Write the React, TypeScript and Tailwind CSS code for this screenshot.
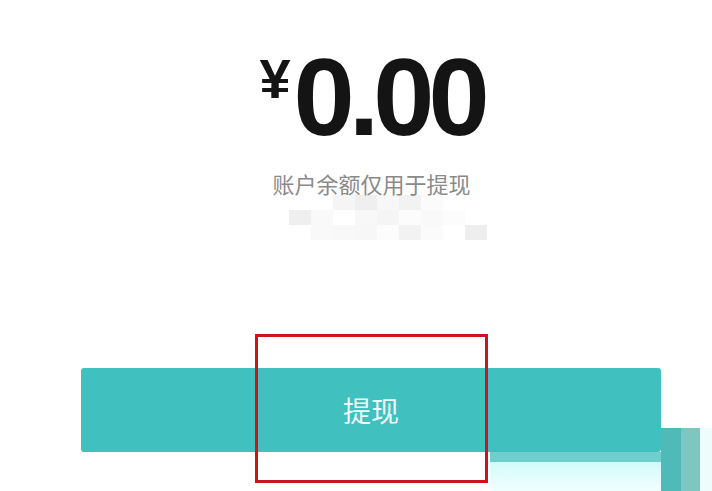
import React from "react";

// mosaic cells left over from a blurred line under the caption
const MOSAIC: string[][] = [
  ["", "", "#f5f5f5", "#efefef", "#f7f7f7", "#f2f2f2", "#fbfbfb", "", ""],
  ["#efefef", "#f9f9f9", "", "#f8f8f8", "#f5f5f5", "#fcfcfc", "#f9f9f9", "#fcfcfc", ""],
  ["", "#f9f9f9", "#f8f8f8", "#f7f7f7", "#fcfcfc", "#f2f2f2", "#fbfbfb", "", "#eeeeee"],
];

export default function App() {
  return (
    <div className="relative h-[491px] w-[712px] overflow-hidden bg-white font-['Liberation_Sans','Noto_Sans_CJK_SC',sans-serif]">
      {/* Balance */}
      <div className="ml-[81px] flex w-[581px] flex-col items-center pt-[42px]">
        <div className="flex items-start text-[#141414]">
          <span className="mt-[9px] mr-[3px] text-[56px] leading-none font-bold">¥</span>
          <span className="text-[110px] leading-none font-bold tracking-[-6px]">0.00</span>
        </div>
        <p className="relative z-10 mt-[20px] font-['Noto_Sans_CJK_SC',sans-serif] text-[22px] leading-[22px] text-[#8a8a8a]">
          账户余额仅用于提现
        </p>
        <div className="mt-[1px] ml-[208px] grid grid-cols-[repeat(9,22px)] grid-rows-[repeat(3,15px)] self-start">
          {MOSAIC.flatMap((row, r) =>
            row.map((c, i) => (
              <div key={`${r}-${i}`} style={c ? { backgroundColor: c } : undefined} />
            ))
          )}
        </div>
      </div>

      {/* Withdraw button */}
      <div className="mt-[128px] ml-[81px] flex items-start">
        <div className="flex w-[580px] flex-col">
          <button
            type="button"
            className="flex h-[84px] w-full items-center justify-center rounded-[3px] bg-[#40c0bf] font-['Noto_Sans_CJK_SC',sans-serif] text-[28px] text-[#eefafa]"
          >
            提现
          </button>
          <div className="ml-[409px] h-[10px] w-[171px] bg-[#6fcfcc]" />
          <div className="ml-[409px] h-[29px] w-[171px] bg-gradient-to-b from-[#d2fbfb] to-[#f2fefe]" />
        </div>
        <div className="mt-[60px] flex h-[63px]">
          <div className="w-[20px] bg-[#4fbab8]" />
          <div className="w-[19px] bg-[#7ec7c1]" />
          <div className="w-[12px] bg-[#eefcfc]" />
        </div>
      </div>

      {/* annotation box */}
      <div className="absolute top-[334px] left-[255px] h-[149px] w-[233px] border-[3px] border-[#c8161d]" />
    </div>
  );
}
